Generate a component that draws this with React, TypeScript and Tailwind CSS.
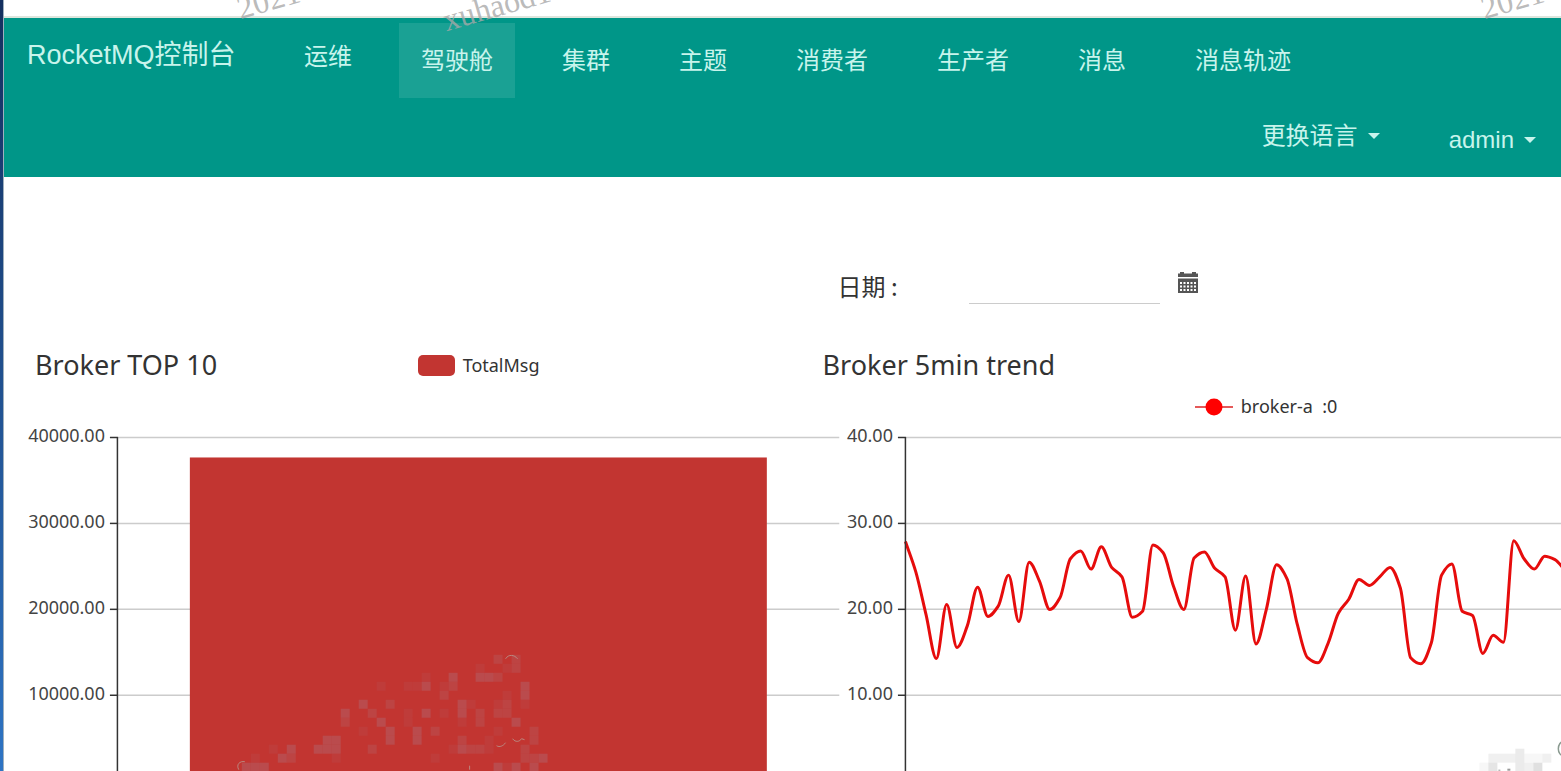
import React, { useState } from "react";
import { clsx } from "clsx";

const NAV_ITEMS = [
  { label: "运维", raised: true },
  { label: "驾驶舱" },
  { label: "集群" },
  { label: "主题" },
  { label: "消费者" },
  { label: "生产者" },
  { label: "消息" },
  { label: "消息轨迹" },
];

const TREND = [
  27.9, 24.4, 19.4, 14.3, 20.6, 15.6, 18.1, 22.6, 19.2, 20.4, 24, 18.6, 25.5,
  23.3, 20, 21.4, 25.9, 26.8, 24.7, 27.3, 24.9, 23.8, 19.1, 19.8, 27.5, 26.6,
  22.7, 20, 26, 26.7, 24.8, 23.8, 17.6, 23.9, 16, 20, 25.2, 23.6, 18.3, 14.4,
  13.8, 16.1, 19.6, 21.2, 23.5, 22.8, 23.8, 24.9, 22.5, 14.4, 13.7, 16.1, 24,
  25.3, 19.8, 19.3, 14.9, 17, 16.2, 28, 25.9, 24.7, 26.2, 25.8, 24.5,
];

// [column, row, strength] of the 9px mosaic tiles over the bar
const TILES: [number, number, number][] = [
  [13, 8, 3], [13, 9, 2], [15, 7, 3], [16, 8, 2], [17, 9, 3], [18, 10, 3],
  [18, 11, 3], [16, 12, 2], [18, 7, 2], [17, 5, 1], [20, 5, 1], [21, 5, 1],
  [22, 4, 1], [22, 5, 3], [22, 8, 3], [21, 10, 3], [21, 11, 3], [23, 10, 2],
  [24, 5, 1], [24, 6, 2], [25, 4, 3], [25, 5, 2], [26, 7, 3], [26, 8, 3],
  [27, 7, 1], [28, 8, 2], [28, 9, 2], [28, 3, 1], [28, 4, 3], [29, 4, 3],
  [30, 4, 2], [30, 2, 2], [31, 3, 1], [32, 2, 2], [32, 3, 2], [33, 5, 3],
  [33, 6, 3], [33, 7, 1], [30, 7, 1], [30, 8, 2], [31, 7, 2], [31, 8, 2],
  [31, 6, 1], [32, 9, 3], [34, 10, 2], [34, 11, 2], [26, 11, 2], [26, 12, 3],
  [27, 12, 2], [28, 12, 2], [29, 12, 1], [25, 12, 1], [29, 11, 1], [30, 10, 1],
  [33, 12, 2], [33, 13, 2], [34, 13, 2], [35, 13, 3], [34, 14, 3], [30, 14, 3],
  [31, 14, 1], [32, 14, 3], [23, 13, 1], [11, 11, 3], [12, 11, 3], [10, 12, 3],
  [11, 12, 3], [12, 12, 3], [12, 13, 1], [7, 12, 3], [6, 13, 3], [7, 13, 2],
  [5, 12, 1], [3, 13, 1], [2, 14, 3], [3, 14, 3], [4, 14, 3], [20, 8, 1],
  [20, 9, 1], [24, 8, 1], [15, 10, 1], [26, 9, 1],
];

const TICKS = [10, 96, 182, 268];
const AXIS_X = 106;

const valueToY = (v: number) => 9.5 + (40 - v) * 8.61;

// Monotone cubic through equally spaced points
const smoothPath = (values: number[], step: number) => {
  const ys = values.map(valueToY);
  const d = ys.slice(1).map((y, i) => (y - ys[i]) / step);
  const m = ys.map((_, i) => {
    if (i === 0) return d[0];
    if (i === ys.length - 1) return d[i - 1];
    if (d[i - 1] * d[i] <= 0) return 0;
    return (2 * d[i - 1] * d[i]) / (d[i - 1] + d[i]);
  });
  let path = `M${AXIS_X - 0.5} ${ys[0]}`;
  for (let i = 1; i < ys.length; i++) {
    const x0 = AXIS_X - 0.5 + (i - 1) * step;
    const x1 = x0 + step;
    path += `C${x0 + step / 3} ${ys[i - 1] + (m[i - 1] * step) / 3} ${x1 - step / 3} ${ys[i] - (m[i] * step) / 3} ${x1} ${ys[i]}`;
  }
  return path;
};

const Caret = () => (
  <svg viewBox="0 0 12 6" className="w-3 h-[6px]" fill="currentColor" aria-hidden="true">
    <path d="M0 0h12L6 6z" />
  </svg>
);

const CalendarIcon = () => (
  <svg viewBox="0 0 20 21" className="w-5 h-[21px]" aria-hidden="true">
    <path d="M0 1.5h2V0h4v1.5h8V0h4v1.5h2V5H0z" fill="#555" />
    <path d="M0 6.5h20V21H0z" fill="#555" />
    <g fill="#fff">
      {[10, 13.5, 17].map((y) =>
        [2, 5.5, 9, 12.5, 16].map((x) => (
          <rect key={`${x}-${y}`} x={x} y={y} width="2" height="2" />
        )),
      )}
    </g>
  </svg>
);

const Navbar = () => {
  const [active, setActive] = useState("驾驶舱");

  return (
    <header className="bg-[#009688] text-[#c8f4ec] border-t-2 border-[#dde6dd] pt-[5px] pb-1 text-2xl">
      <nav className="flex h-[75px] whitespace-nowrap">
        <a href="#" className="pl-[23px] pt-3 text-[27px] leading-10 w-[278px] shrink-0">
          RocketMQ控制台
        </a>
        <div className="flex gap-[25px]">
          {NAV_ITEMS.map(({ label, raised }) => (
            <a
              key={label}
              href="#"
              onClick={() => setActive(label)}
              className={clsx(
                "flex items-center px-[22px]",
                raised && "pb-2",
                active === label && "bg-white/10",
              )}
            >
              {label}
            </a>
          ))}
        </div>
      </nav>
      <div className="flex justify-end gap-[25px] h-[75px] pr-[3px]">
        <button className="flex items-center gap-[10px] px-[22px]">
          更换语言
          <Caret />
        </button>
        <button className="flex items-center gap-[10px] px-[22px] pt-2">
          admin
          <Caret />
        </button>
      </div>
    </header>
  );
};

const Plot = ({
  labels,
  gridEnd,
  children,
}: {
  labels: string[];
  gridEnd: number;
  children: React.ReactNode;
}) => (
  <svg viewBox="0 0 934 344" className="block w-full overflow-visible">
    {TICKS.map((y, i) => (
      <g key={y}>
        <path d={`M${AXIS_X} ${y - 0.5}H${gridEnd}`} stroke="#ccc" strokeWidth="1.5" />
        <path d={`M98 ${y - 0.5}H${AXIS_X}`} stroke="#333" strokeWidth="1.5" />
        <text x="93" y={y + 4} textAnchor="end" fontSize="18" fill="#444">
          {labels[i]}
        </text>
      </g>
    ))}
    {children}
    <path d={`M${AXIS_X - 0.5} 9V344`} stroke="#333" strokeWidth="1.5" />
  </svg>
);

const BrokerTop = () => (
  <section className="w-[118.5%]">
    <div className="grid grid-cols-[1fr_auto_1fr] items-center h-[38px]">
      <h2 className="pl-[23px] text-[27px] leading-[38px]">Broker TOP 10</h2>
      <div className="flex items-center gap-2 text-lg leading-6">
        <span className="w-[37px] h-[21px] rounded-[5px] bg-[#c23531]" />
        TotalMsg
      </div>
    </div>
    <div className="h-11" />
    <Plot labels={["40000.00", "30000.00", "20000.00", "10000.00"]} gridEnd={828}>
      <rect x="178" y="29.5" width="577.5" height="314.5" fill="#c23531" />
      <g fill="#b07078">
        {TILES.map(([c, r, s]) => (
          <rect
            key={`${c}-${r}`}
            x={212 + 9 * c}
            y={209 + 9 * r}
            width="9"
            height="9"
            opacity={s * 0.13}
          />
        ))}
      </g>
      <g fill="none" stroke="#b89a92" strokeWidth="1" opacity="0.8">
        <path d="M233 334c-5-1-9 3-6 8M494 231c3-5 9-4 12 0M485 318c3 2 7 0 9-3M501 311c3 4 7 3 9 0l3 1M458 338v4" />
      </g>
    </Plot>
  </section>
);

const BrokerTrend = () => (
  <section className="w-[118.5%]">
    <h2 className="pl-[23px] text-[27px] leading-[38px]">Broker 5min trend</h2>
    <div className="flex items-center justify-center gap-2 h-11 text-lg leading-6 whitespace-pre">
      <svg viewBox="0 0 38 20" className="w-[38px] h-5" aria-hidden="true">
        <path d="M0 11h38" stroke="#d22" strokeWidth="1.5" />
        <circle cx="19" cy="11" r="8.5" fill="#f00" />
      </svg>
      {"broker-a  :0"}
    </div>
    <Plot labels={["40.00", "30.00", "20.00", "10.00"]} gridEnd={828}>
      <path
        d={smoothPath(TREND, 10.32)}
        fill="none"
        stroke="#e60c0c"
        strokeWidth="3"
        strokeLinejoin="round"
      />
      <g fill="#999">
        <rect x="689" y="326" width="27" height="9" opacity="0.15" />
        <rect x="716" y="321" width="9" height="23" opacity="0.2" />
        <rect x="725" y="326" width="18" height="9" opacity="0.08" />
        <rect x="743" y="326" width="9" height="9" opacity="0.15" />
        <rect x="680" y="335" width="9" height="9" opacity="0.08" />
        <rect x="689" y="335" width="9" height="9" opacity="0.25" />
        <rect x="725" y="335" width="9" height="9" opacity="0.15" />
        <rect x="734" y="335" width="9" height="9" opacity="0.3" />
        <rect x="699" y="342" width="2" height="1" />
        <rect x="708" y="341" width="3" height="2" />
      </g>
      <ellipse cx="764" cy="321" rx="5" ry="7" fill="none" stroke="#8a9a90" strokeWidth="1.5" />
    </Plot>
  </section>
);

const Watermark = () => (
  <div
    aria-hidden="true"
    className="absolute inset-x-0 top-0 h-8 overflow-hidden pointer-events-none font-['Liberation_Serif',serif] text-[32px] leading-8 text-[#a8a8a8]/80"
  >
    <span className="absolute left-[242px] -top-2 -rotate-[16deg] origin-bottom-left">2021</span>
    <span className="absolute left-[448px] top-1 -rotate-[16deg] origin-bottom-left">xuhaod1</span>
    <span className="absolute left-[1486px] -top-2 -rotate-[16deg] origin-bottom-left">2021</span>
  </div>
);

export default function App() {
  return (
    <div className="relative flex h-screen overflow-hidden bg-white text-[#333] font-['Noto_Sans','Noto_Sans_CJK_SC',sans-serif]">
      <div className="w-1 shrink-0 border-r border-[#9fb0bd] bg-linear-to-b from-[#14305f] to-[#2e74c4]" />
      <div className="flex-1 min-w-0 pt-4">
        <div className="font-['Liberation_Sans','Noto_Sans_CJK_SC',sans-serif]">
          <Navbar />
        </div>
        <main className="pl-2">
          <div className="-mr-[26px] grid grid-cols-2">
            <div className="col-start-2 flex items-center pl-[38px] pt-[83px] pb-[42px] text-2xl font-['Noto_Sans_CJK_SC',sans-serif]">
              <label htmlFor="date" className="w-[131px] pt-2 leading-9">
                日期 :
              </label>
              <input
                id="date"
                type="text"
                className="w-[191px] h-[43px] border-b border-[#ccc] outline-none"
              />
              <button aria-label="日期" className="ml-[18px]">
                <CalendarIcon />
              </button>
            </div>
            <BrokerTop />
            <BrokerTrend />
          </div>
        </main>
      </div>
      <Watermark />
    </div>
  );
}
